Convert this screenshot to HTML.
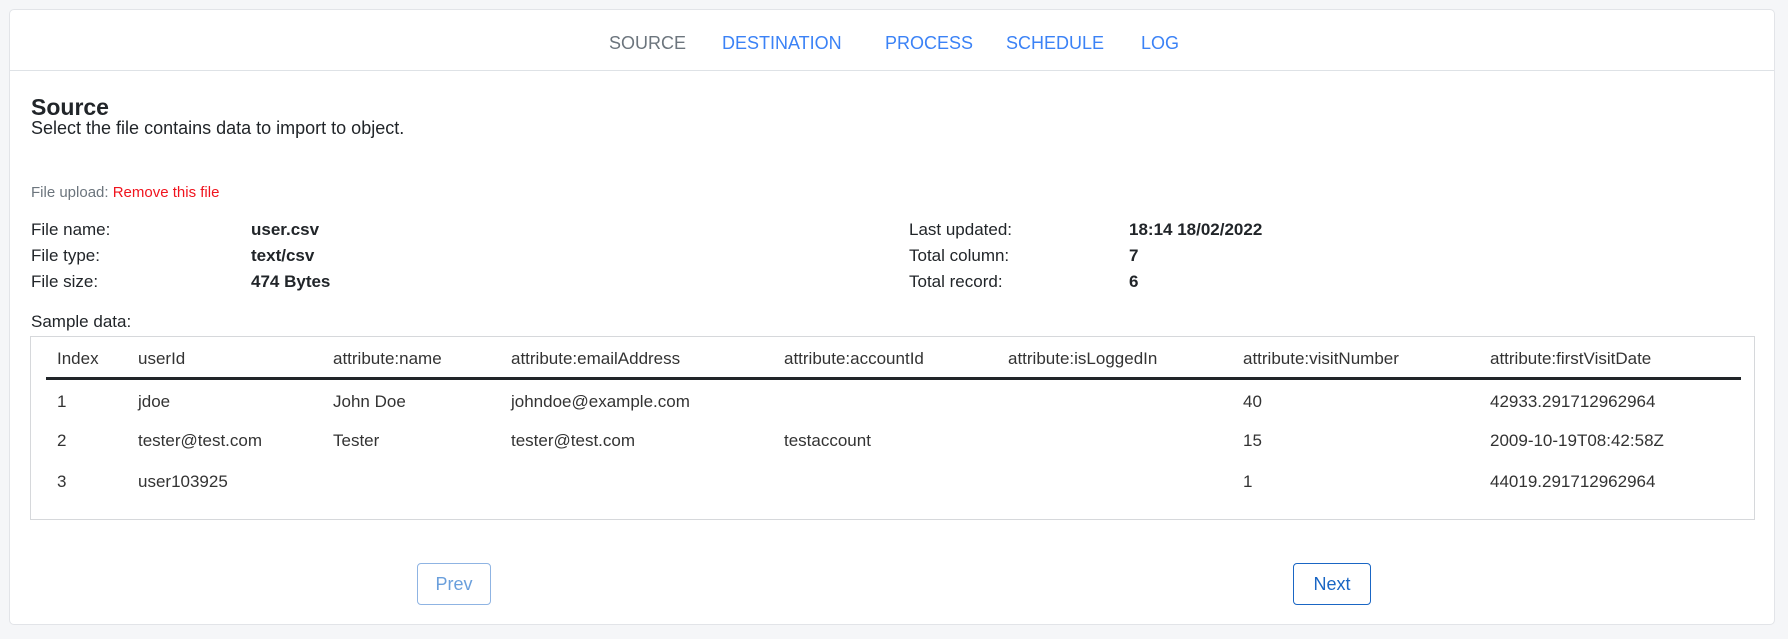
<!DOCTYPE html>
<html><head><meta charset="utf-8">
<style>
*{box-sizing:border-box;margin:0;padding:0}
body{width:1788px;height:639px;background:#f5f6f8;font-family:"Liberation Sans",sans-serif;color:#212529;position:relative;overflow:hidden}
.card{position:absolute;left:9px;top:9px;width:1766px;height:616px;background:#fff;border:1px solid #e2e4e8;border-radius:5px}
.a{position:absolute;white-space:nowrap;line-height:1}
.nav{position:absolute;left:0;top:0;width:100%;height:61px;border-bottom:1px solid #dee2e6}
.nav span{position:absolute;top:23px;font-size:18px;color:#3b82f6}
.lbl{font-size:17px}
.b{font-weight:bold;font-size:17px}
.tbl{position:absolute;left:20px;top:326px;width:1725px;height:184px;border:1px solid #d6d8db}
.th{font-size:17px;color:#333}
.btn{position:absolute;top:553px;height:42px;border:1px solid;border-radius:4px;font-size:18px;display:flex;align-items:center;justify-content:center}
</style></head><body>
<div class="card">
 <div class="nav">
  <span style="left:599px;color:#6c757d">SOURCE</span>
  <span style="left:712px">DESTINATION</span>
  <span style="left:875px">PROCESS</span>
  <span style="left:996px">SCHEDULE</span>
  <span style="left:1131px">LOG</span>
 </div>
 <div class="a" style="left:21px;top:86px;font-size:23px;font-weight:bold">Source</div>
 <div class="a" style="left:21px;top:109px;font-size:18px">Select the file contains data to import to object.</div>
 <div class="a" style="left:21px;top:175px;font-size:15px;color:#6c757d">File upload: <span style="color:#f0141e">Remove this file</span></div>
 <div class="a lbl" style="left:21px;top:211px">File name:</div>
 <div class="a lbl" style="left:21px;top:237px">File type:</div>
 <div class="a lbl" style="left:21px;top:263px">File size:</div>
 <div class="a b" style="left:241px;top:211px">user.csv</div>
 <div class="a b" style="left:241px;top:237px">text/csv</div>
 <div class="a b" style="left:241px;top:263px">474 Bytes</div>
 <div class="a lbl" style="left:899px;top:211px">Last updated:</div>
 <div class="a lbl" style="left:899px;top:237px">Total column:</div>
 <div class="a lbl" style="left:899px;top:263px">Total record:</div>
 <div class="a b" style="left:1119px;top:211px">18:14 18/02/2022</div>
 <div class="a b" style="left:1119px;top:237px">7</div>
 <div class="a b" style="left:1119px;top:263px">6</div>
 <div class="a lbl" style="left:21px;top:303px">Sample data:</div>
 <div class="tbl">
  <div style="position:absolute;left:15px;top:40px;width:1695px;height:3px;background:#212529"></div>
 </div>
 <div class="a th" style="left:47px;top:340px">Index</div>
 <div class="a th" style="left:128px;top:340px">userId</div>
 <div class="a th" style="left:323px;top:340px">attribute:name</div>
 <div class="a th" style="left:501px;top:340px">attribute:emailAddress</div>
 <div class="a th" style="left:774px;top:340px">attribute:accountId</div>
 <div class="a th" style="left:998px;top:340px">attribute:isLoggedIn</div>
 <div class="a th" style="left:1233px;top:340px">attribute:visitNumber</div>
 <div class="a th" style="left:1480px;top:340px">attribute:firstVisitDate</div>

 <div class="a th" style="left:47px;top:383px">1</div>
 <div class="a th" style="left:128px;top:383px">jdoe</div>
 <div class="a th" style="left:323px;top:383px">John Doe</div>
 <div class="a th" style="left:501px;top:383px">johndoe@example.com</div>
 <div class="a th" style="left:1233px;top:383px">40</div>
 <div class="a th" style="left:1480px;top:383px">42933.291712962964</div>

 <div class="a th" style="left:47px;top:422px">2</div>
 <div class="a th" style="left:128px;top:422px">tester@test.com</div>
 <div class="a th" style="left:323px;top:422px">Tester</div>
 <div class="a th" style="left:501px;top:422px">tester@test.com</div>
 <div class="a th" style="left:774px;top:422px">testaccount</div>
 <div class="a th" style="left:1233px;top:422px">15</div>
 <div class="a th" style="left:1480px;top:422px">2009-10-19T08:42:58Z</div>

 <div class="a th" style="left:47px;top:463px">3</div>
 <div class="a th" style="left:128px;top:463px">user103925</div>
 <div class="a th" style="left:1233px;top:463px">1</div>
 <div class="a th" style="left:1480px;top:463px">44019.291712962964</div>

 <div class="btn" style="left:407px;width:74px;border-color:#8fb4e3;color:#6a9fdc">Prev</div>
 <div class="btn" style="left:1283px;width:78px;border-color:#1a66c4;color:#1a66c4">Next</div>
</div>
</body></html>
